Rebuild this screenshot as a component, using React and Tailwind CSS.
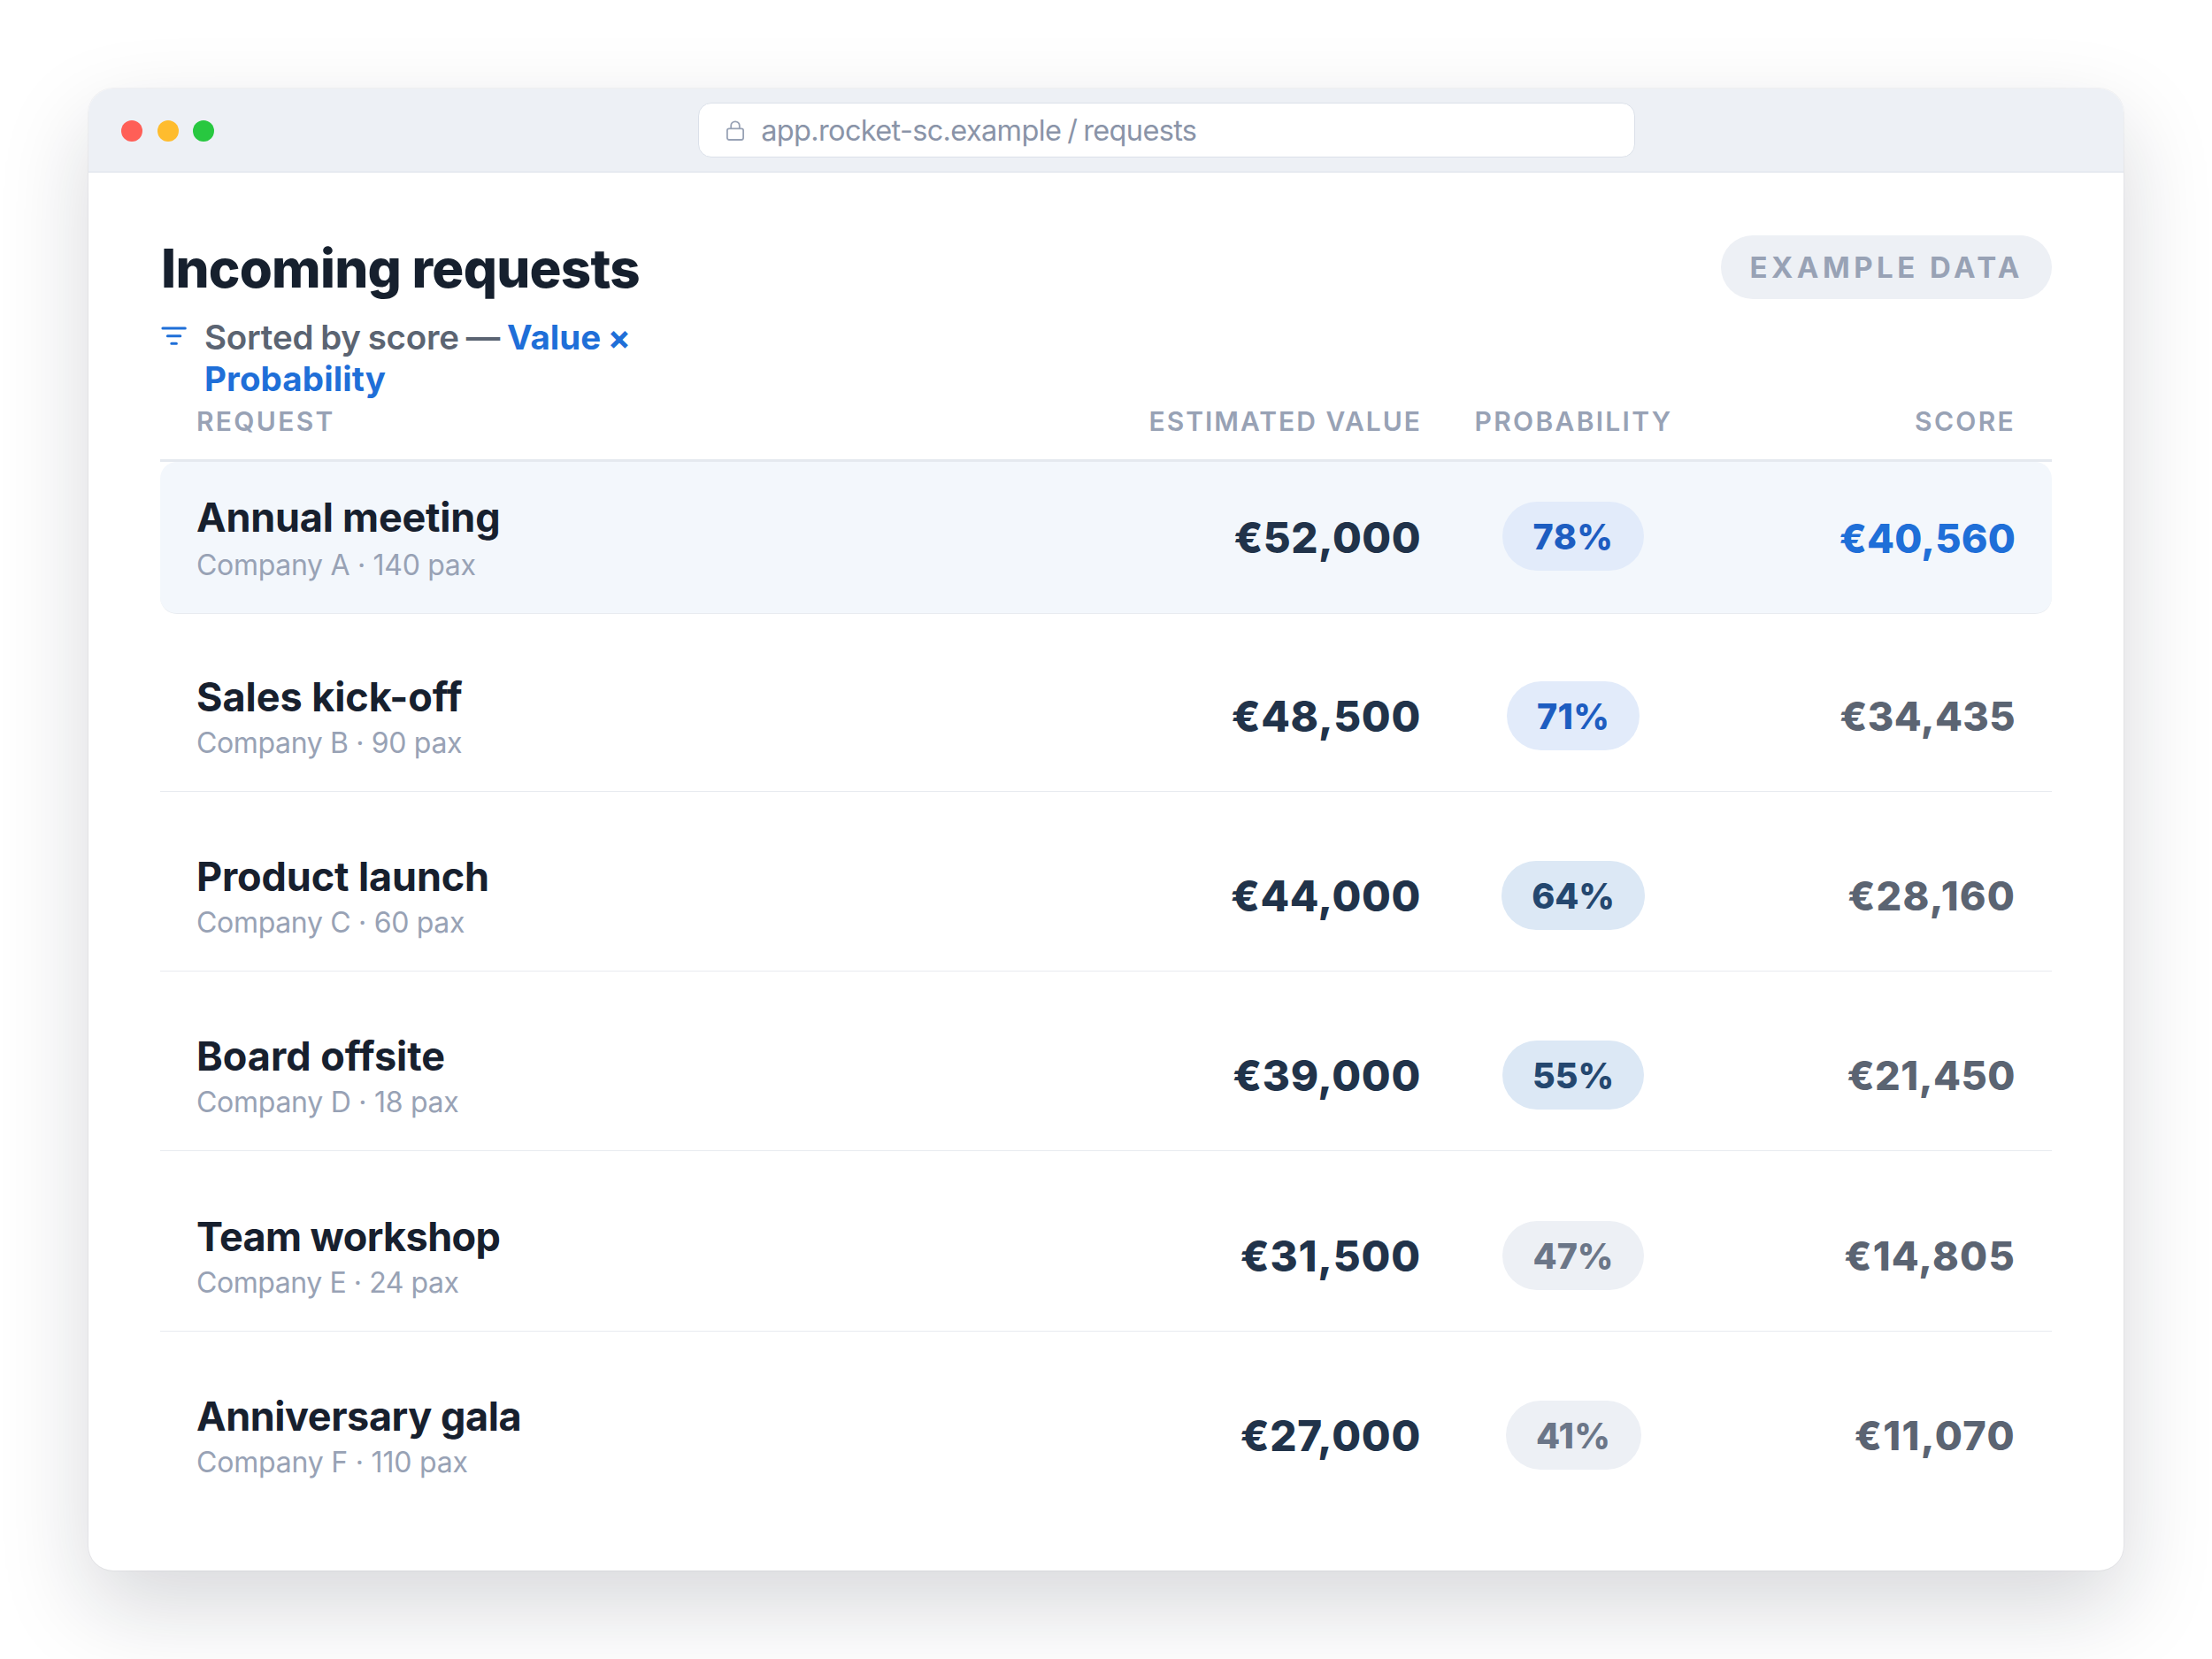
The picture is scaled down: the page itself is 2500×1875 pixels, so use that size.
import React from "react";

const HIGH = "bg-[#e2ebfa] text-[#1d5dc1]";
const MID = "bg-[#dce8f5] text-[#24476f]";
const LOW = "bg-[#edf0f5] text-[#6b7688]";

const ROWS = [
  {
    name: "Annual meeting", nameTrack: "tracking-[-0.22px]",
    meta: "Company A · 140 pax", metaTrack: "tracking-[-0.3px]",
    value: "€52,000", valueTrack: "tracking-[0.5px]",
    prob: "78%", pill: `${HIGH} w-[160px] tracking-[0.5px]`,
    score: "€40,560", scoreTrack: "tracking-[0.2px]", top: true,
  },
  {
    name: "Sales kick-off", nameTrack: "tracking-[-0.05px]",
    meta: "Company B · 90 pax", metaTrack: "tracking-[-0.35px]",
    value: "€48,500", valueTrack: "tracking-[0.7px]",
    prob: "71%", pill: `${HIGH} w-[150px] tracking-[0.3px]`,
    score: "€34,435", scoreTrack: "tracking-[0.4px]",
  },
  {
    name: "Product launch", nameTrack: "tracking-[-0.13px]",
    meta: "Company C · 60 pax", metaTrack: "tracking-[-0.32px]",
    value: "€44,000", valueTrack: "tracking-[0.65px]",
    prob: "64%", pill: `${MID} w-[162px] tracking-[-0.1px]`,
    score: "€28,160", scoreTrack: "tracking-[1.2px]",
  },
  {
    name: "Board offsite", nameTrack: "tracking-[0px]",
    meta: "Company D · 18 pax", metaTrack: "tracking-[-0.27px]",
    value: "€39,000", valueTrack: "tracking-[0.7px]",
    prob: "55%", pill: `${MID} w-[160px] tracking-[0px]`,
    score: "€21,450", scoreTrack: "tracking-[0.5px]",
  },
  {
    name: "Team workshop", nameTrack: "tracking-[-0.6px]",
    meta: "Company E · 24 pax", metaTrack: "tracking-[-0.43px]",
    value: "€31,500", valueTrack: "tracking-[0.85px]",
    prob: "47%", pill: `${LOW} w-[160px] tracking-[0px]`,
    score: "€14,805", scoreTrack: "tracking-[1.2px]",
  },
  {
    name: "Anniversary gala", nameTrack: "tracking-[-0.43px]",
    meta: "Company F · 110 pax", metaTrack: "tracking-[-0.2px]",
    value: "€27,000", valueTrack: "tracking-[0.75px]",
    prob: "41%", pill: `${LOW} w-[153px] tracking-[0.2px]`,
    score: "€11,070", scoreTrack: "tracking-[1.4px]", last: true,
  },
];

const COLS = "grid grid-cols-[1fr_340px_262px_328px] gap-x-[41px] pr-[41px] pl-[41px]";

function LockIcon() {
  return (
    <svg className="h-[24px] w-[22px] shrink-0" viewBox="0 0 22 24" fill="none" stroke="#98a2b5" strokeWidth="1.8">
      <rect x="1.9" y="9.4" width="18.2" height="12.6" rx="2.2" />
      <path d="M6.2 9.4V6.1a4.8 4.8 0 0 1 9.6 0v3.3" />
    </svg>
  );
}

function SortIcon() {
  return (
    <svg className="mt-[11px] h-[22px] w-[30px] shrink-0" viewBox="0 0 30 22" fill="none" stroke="#1f6fd8" strokeWidth="3" strokeLinecap="round">
      <path d="M2.9 2h25.4M8.4 10.7h14.4M12.8 19.3h5.6" />
    </svg>
  );
}

function BrowserBar() {
  return (
    <div className="flex h-[95px] items-center border-b-[1.5px] border-[#dbe0e9] bg-[#edf0f5] pl-[37px]">
      <div className="mt-[2px] flex gap-[16.6px]">
        <span className="size-[24px] rounded-full bg-[#ff5f57]" />
        <span className="size-[24px] rounded-full bg-[#febc2e]" />
        <span className="size-[24px] rounded-full bg-[#28c840]" />
      </div>
      <div className="ml-[547px] flex h-[62px] w-[1059px] items-center gap-[18px] rounded-[15px] border-[1.5px] border-[#dbe0e9] bg-white pt-[2px] pl-[30px] text-[32.5px] leading-none tracking-[-0.65px] text-[#8a94a8]">
        <LockIcon />
        <span className="whitespace-pre [word-spacing:-1.5px]">app.rocket-sc.example / requests</span>
      </div>
    </div>
  );
}

function Row({ row, second }) {
  return (
    <div
      className={`${COLS} h-[172px] ${
        row.top ? "rounded-[19px] bg-[#f3f7fc]" : second ? "mt-[29px]" : "mt-[31.2px]"
      } ${row.last ? "" : "border-b-[1.5px] border-[#e8ebf0]"}`}
    >
      <div className={row.top ? "pt-[36px]" : "pt-[38px]"}>
        <div className={`h-[54px] text-[45px] leading-[54px] font-bold text-[#17202e] ${row.nameTrack}`}>{row.name}</div>
        <div className={`text-[32px] leading-[52px] text-[#98a2b5] ${row.metaTrack} ${row.top ? "mt-[1px]" : "mt-[-1px]"}`}>{row.meta}</div>
      </div>
      <div className={`text-right text-[47.5px] font-extrabold text-[#21334a] ${row.valueTrack} ${row.top ? "leading-[171px]" : "leading-[173px]"}`}>{row.value}</div>
      <div className={`flex justify-center ${row.top ? "pt-[45px]" : "pt-[47px]"}`}>
        <span className={`h-[78px] rounded-full text-center text-[39.5px] leading-[80px] font-extrabold ${row.pill}`}>{row.prob}</span>
      </div>
      <div className={`text-right text-[45px] leading-[174px] font-extrabold ${row.scoreTrack} ${row.top ? "text-[#1f6fd8]" : "text-[#5b6472]"}`}>{row.score}</div>
    </div>
  );
}

export default function App() {
  return (
    <div className="h-[1875px] w-[2500px] overflow-hidden bg-white p-[100px] font-['Inter',sans-serif]">
      <div className="h-[1675px] overflow-hidden rounded-[28px] bg-white shadow-[0_0_0_1px_rgba(20,30,50,0.04),0_40px_100px_rgba(20,26,40,0.17)]">
        <BrowserBar />
        <div className="px-[81px] pt-[71px]">
          <div className="flex h-[185px] items-start justify-between">
            <div className="w-[560px]">
              <h1 className="pt-[4px] pl-px text-[60px] leading-[66px] font-extrabold tracking-[-0.75px] whitespace-nowrap text-[#16202e]">Incoming requests</h1>
              <div className="mt-[22px] flex gap-[20px]">
                <SortIcon />
                <div className="text-[38.5px] leading-[47px] font-semibold tracking-[-0.2px] whitespace-nowrap text-[#5b6472] [word-spacing:-1.6px]">
                  <p>
                    Sorted by score — <b className="font-bold tracking-[0px] text-[#1f6fd8]">Value ×</b>
                  </p>
                  <p className="font-bold tracking-[0.1px] text-[#1f6fd8]">Probability</p>
                </div>
              </div>
            </div>
            <span className="h-[72px] rounded-full bg-[#edf0f5] pr-[32px] pl-[32px] text-[33px] leading-[72px] font-bold tracking-[4.5px] text-[#98a2b5]">EXAMPLE DATA</span>
          </div>
          <div className={`${COLS} h-[71px] border-b-[3px] border-[#e5e9ef] text-[30px] leading-[51px] font-semibold tracking-[2.3px] text-[#98a2b5]`}>
            <div>REQUEST</div>
            <div className="-mr-px text-right tracking-[2px]">ESTIMATED VALUE</div>
            <div className="-mr-px text-center">PROBABILITY</div>
            <div className="text-right">SCORE</div>
          </div>
          {ROWS.map((row, i) => (
            <Row key={row.name} row={row} second={i === 1} />
          ))}
        </div>
      </div>
    </div>
  );
}
